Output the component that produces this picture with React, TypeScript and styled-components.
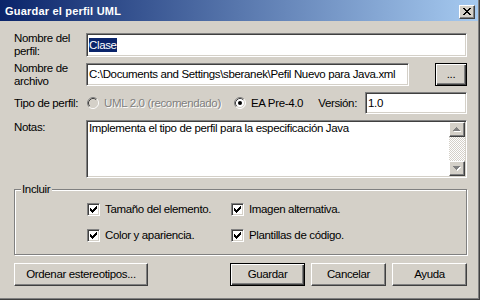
import React from 'react';
import styled, { createGlobalStyle, css } from 'styled-components';

const Global = createGlobalStyle`
  html, body { margin: 0; padding: 0; background: #d4d0c8; }
  body { font-family: "Liberation Sans", Arial, sans-serif; font-size: 11.5px; }
  * { box-sizing: border-box; }
`;

const sunken = css`
  border: 1px solid;
  border-color: #808080 #ffffff #ffffff #808080;
  box-shadow: inset 1px 1px 0 #404040, inset -1px -1px 0 #d4d0c8;
`;

const raised = css`
  border: 1px solid;
  border-color: #ffffff #404040 #404040 #ffffff;
  box-shadow: inset -1px -1px 0 #808080, inset 1px 1px 0 #d4d0c8;
  background: #d4d0c8;
`;

const Window = styled.div`
  width: 480px;
  height: 300px;
  background: #d4d0c8;
  border-right: 1px solid #404040;
  border-bottom: 1px solid #404040;
  box-shadow: inset -1px -1px 0 #808080;
  display: flex;
  flex-direction: column;
  color: #000;
  letter-spacing: -0.35px;
  line-height: 13px;
`;

const TitleBar = styled.div`
  height: 21px;
  margin-right: 1px;
  padding: 2px 3px 0 5px;
  display: flex;
  align-items: center;
  justify-content: space-between;
  background: linear-gradient(to right, #0a246a, #a6caf0);
  color: #fff;
  font-size: 11px;
  font-weight: bold;
  letter-spacing: 0.2px;
`;

const CloseButton = styled.div`
  ${raised};
  width: 16px;
  height: 14px;
  display: flex;
  align-items: center;
  justify-content: center;
  padding-bottom: 1px;
`;

const Form = styled.div`
  display: grid;
  grid-template-columns: 72px 1fr;
  grid-template-rows: 24px 23px 22px 58px;
  row-gap: 6px;
  padding: 12px 12px 0 14px;
`;

const Label = styled.div<{ $top?: boolean }>`
  align-self: ${(p) => (p.$top ? 'start' : 'center')};
  padding-top: ${(p) => (p.$top ? '1px' : '0')};
`;

const Field = styled.div<{ $width?: number }>`
  ${sunken};
  background: #fff;
  height: 100%;
  width: ${(p) => (p.$width ? `${p.$width}px` : 'auto')};
  display: flex;
  align-items: center;
  padding: 0 2px;
  white-space: nowrap;
  overflow: hidden;
`;

const Selected = styled.span`
  background: #0a246a;
  color: #fff;
  line-height: 14px;
`;

const SplitRow = styled.div`
  display: flex;
  justify-content: space-between;
`;

const PushButton = styled.div<{ $default?: boolean; $width?: number }>`
  ${raised};
  width: ${(p) => (p.$width ? `${p.$width}px` : 'auto')};
  height: 23px;
  display: flex;
  align-items: center;
  justify-content: center;
  ${(p) =>
    p.$default &&
    css`
      border: 1px solid #000;
      box-shadow: inset 1px 1px 0 #fff, inset -1px -1px 0 #404040, inset -2px -2px 0 #808080;
    `}
`;

const RadioRow = styled.div`
  display: flex;
  align-items: center;
  padding-left: 1px;
`;

const RadioOption = styled.div<{ $width?: number; $disabled?: boolean }>`
  display: flex;
  align-items: center;
  gap: 5px;
  width: ${(p) => (p.$width ? `${p.$width}px` : 'auto')};
  color: ${(p) => (p.$disabled ? '#808080' : '#000')};
  text-shadow: ${(p) => (p.$disabled ? '1px 1px 0 #fff' : 'none')};
`;

const Version = styled.div`
  margin-left: auto;
  display: flex;
  align-items: center;
  gap: 8px;
  height: 100%;
`;

const TextBox = styled.div`
  ${sunken};
  background: #fff;
  display: flex;
  padding: 1px;
`;

const NoteText = styled.div`
  flex: 1;
  padding: 0 1px;
`;

const ScrollBar = styled.div`
  width: 16px;
  display: flex;
  flex-direction: column;
`;

const ScrollButton = styled.div`
  ${raised};
  height: 15px;
  display: flex;
  align-items: center;
  justify-content: center;
`;

const ScrollTrack = styled.div`
  flex: 1;
  background: repeating-conic-gradient(#ffffff 0 25%, #d4d0c8 0 50%) 0 0 / 2px 2px;
`;

const GroupBox = styled.div`
  position: relative;
  margin: 11px 12px 0 14px;
  height: 66px;
  border: 1px solid #808080;
  box-shadow: inset 1px 1px 0 #fff, 1px 1px 0 #fff;
  display: grid;
  grid-template-columns: 144px auto;
  grid-auto-rows: 13px;
  row-gap: 13px;
  padding: 13px 0 0 72px;
`;

const Legend = styled.span`
  position: absolute;
  top: -7px;
  left: 6px;
  padding: 0 2px 0 1px;
  background: #d4d0c8;
`;

const CheckItem = styled.div`
  display: flex;
  align-items: center;
  gap: 5px;
`;

const CheckBox = styled.div`
  ${sunken};
  width: 13px;
  height: 13px;
  background: #fff;
  display: flex;
  align-items: center;
  justify-content: center;
`;

const ButtonRow = styled.div`
  display: flex;
  gap: 6px;
  margin: 8px 12px 0 14px;
`;

const Spacer = styled.div`
  flex: 1;
`;

const px = (rows: number[][], color: string, dx = 0, dy = 0) =>
  rows.flatMap((r, y) =>
    r.length ? [<rect key={`${color}${y}${dx}`} x={r[0] + dx} y={y + dy} width={r[1] - r[0] + 1} height={1} fill={color} />] : []
  );

const CloseGlyph = () => (
  <svg width="8" height="7" shapeRendering="crispEdges">
    <rect x="0" y="0" width="2" height="1" />
    <rect x="6" y="0" width="2" height="1" />
    <rect x="1" y="1" width="2" height="1" />
    <rect x="5" y="1" width="2" height="1" />
    <rect x="2" y="2" width="4" height="1" />
    <rect x="3" y="3" width="2" height="1" />
    <rect x="2" y="4" width="4" height="1" />
    <rect x="1" y="5" width="2" height="1" />
    <rect x="5" y="5" width="2" height="1" />
    <rect x="0" y="6" width="2" height="1" />
    <rect x="6" y="6" width="2" height="1" />
  </svg>
);

const CheckMark = () => (
  <svg width="7" height="7" shapeRendering="crispEdges">
    <rect x="6" y="0" width="1" height="1" />
    <rect x="5" y="1" width="2" height="1" />
    <rect x="0" y="2" width="1" height="1" />
    <rect x="4" y="2" width="3" height="1" />
    <rect x="0" y="3" width="2" height="1" />
    <rect x="3" y="3" width="3" height="1" />
    <rect x="0" y="4" width="5" height="1" />
    <rect x="1" y="5" width="3" height="1" />
    <rect x="2" y="6" width="1" height="1" />
  </svg>
);

const Radio = ({ checked, disabled }: { checked?: boolean; disabled?: boolean }) => (
  <svg width="12" height="12">
    <circle cx="6" cy="6" r="5" fill={disabled ? '#d4d0c8' : '#fff'} />
    <path d="M2.11 9.89 A5.5 5.5 0 0 1 9.89 2.11" fill="none" stroke="#808080" />
    <path d="M9.89 2.11 A5.5 5.5 0 0 1 2.11 9.89" fill="none" stroke="#fff" />
    <path d="M2.82 9.18 A4.5 4.5 0 0 1 9.18 2.82" fill="none" stroke="#404040" />
    <path d="M9.18 2.82 A4.5 4.5 0 0 1 2.82 9.18" fill="none" stroke="#d4d0c8" />
    {checked && <circle cx="6" cy="6" r="2" fill="#000" />}
  </svg>
);

const upRows = [[3, 3], [2, 4], [1, 5], [0, 6]];
const Arrow = ({ down }: { down?: boolean }) => {
  const rows = down ? [...upRows].reverse() : upRows;
  return (
    <svg width="8" height="5" shapeRendering="crispEdges">
      {px(rows, '#ffffff', 1, 1)}
      {px(rows, '#808080')}
    </svg>
  );
};

const Check = ({ label }: { label: string }) => (
  <CheckItem>
    <CheckBox>
      <CheckMark />
    </CheckBox>
    <span>{label}</span>
  </CheckItem>
);

export default function App() {
  return (
    <>
      <Global />
      <Window>
        <TitleBar>
          <span>Guardar el perfil UML</span>
          <CloseButton>
            <CloseGlyph />
          </CloseButton>
        </TitleBar>
        <Form>
          <Label>
            Nombre del
            <br />
            perfil:
          </Label>
          <Field>
            <Selected>Clase</Selected>
          </Field>
          <Label>
            Nombre de
            <br />
            archivo
          </Label>
          <SplitRow>
            <Field $width={323}>C:\Documents and Settings\sberanek\Pefil Nuevo para Java.xml</Field>
            <PushButton $default $width={32}>...</PushButton>
          </SplitRow>
          <Label>Tipo de perfil:</Label>
          <RadioRow>
            <RadioOption $width={147} $disabled>
              <Radio disabled />
              <span>UML 2.0 (recomendado)</span>
            </RadioOption>
            <RadioOption>
              <Radio checked />
              <span>EA Pre-4.0</span>
            </RadioOption>
            <Version>
              <span>Versión:</span>
              <Field $width={102}>1.0</Field>
            </Version>
          </RadioRow>
          <Label $top>Notas:</Label>
          <TextBox>
            <NoteText>Implementa el tipo de perfil para la especificación Java</NoteText>
            <ScrollBar>
              <ScrollButton>
                <Arrow />
              </ScrollButton>
              <ScrollTrack />
              <ScrollButton>
                <Arrow down />
              </ScrollButton>
            </ScrollBar>
          </TextBox>
        </Form>
        <GroupBox>
          <Legend>Incluir</Legend>
          <Check label="Tamaño del elemento." />
          <Check label="Imagen alternativa." />
          <Check label="Color y apariencia." />
          <Check label="Plantillas de código." />
        </GroupBox>
        <ButtonRow>
          <PushButton $width={134}>Ordenar estereotipos...</PushButton>
          <Spacer />
          <PushButton $default $width={75}>Guardar</PushButton>
          <PushButton $width={75}>Cancelar</PushButton>
          <PushButton $width={75}>Ayuda</PushButton>
        </ButtonRow>
      </Window>
    </>
  );
}
